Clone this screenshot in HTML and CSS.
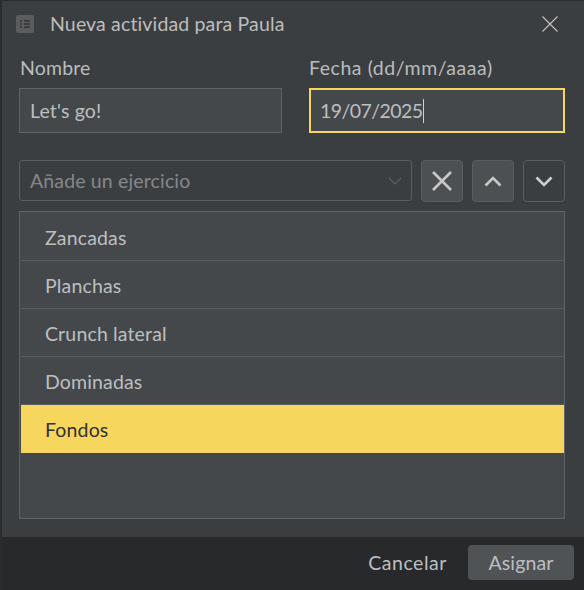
FILE: index.html
```html
<!DOCTYPE html>
<html lang="es">
<head>
<meta charset="utf-8">
<title>Nueva actividad</title>
<link rel="stylesheet" href="styles.css">
</head>
<body>
<div class="dialog">
  <header class="titlebar">
    <svg class="app-icon" width="18" height="18" viewBox="0 0 18 18"><rect width="18" height="18" rx="2" fill="#5a5c5e"/><path d="M4 5h2v2H4zM8 5h6v2H8zM4 8h2v2H4zM8 8h6v2H8zM4 11h2v2H4zM8 11h6v2H8z" fill="#3b3e40"/></svg>
    <span class="title">Nueva actividad para Paula</span>
    <svg class="close" width="16" height="16" viewBox="0 0 16 16"><path d="M.5.5l15 15M15.500.5l-15 15" stroke="#c4c4c4" stroke-width="1.100" fill="none"/></svg>
  </header>
  <main class="content">
    <div class="fields">
      <label class="field name">
        <span class="label">Nombre</span>
        <span class="input">Let's go!</span>
      </label>
      <label class="field date">
        <span class="label date-label">Fecha (dd/mm/aaaa)</span>
        <span class="input focused">19/07/2025<i class="caret"></i></span>
      </label>
    </div>
    <div class="toolbar">
      <div class="combo">
        <span>Añade un ejercicio</span>
        <svg width="14" height="8" viewBox="0 0 14 8"><path d="M1 1l6 6 6-6" stroke="#5d6062" stroke-width="1.200" fill="none"/></svg>
      </div>
      <button class="tool filled"><svg width="20" height="20" viewBox="0 0 20 20"><path d="M1 1l18 18M19 1L1 19" stroke="#c8c8c8" stroke-width="2.600" fill="none"/></svg></button>
      <button class="tool filled"><svg width="18" height="11" viewBox="0 0 18 11"><path d="M1.500 9.500L9 2l7.500 7.500" stroke="#c8c8c8" stroke-width="2.600" fill="none"/></svg></button>
      <button class="tool"><svg width="18" height="11" viewBox="0 0 18 11"><path d="M1.500 1.500L9 9l7.500-7.500" stroke="#d0d0d0" stroke-width="2.600" fill="none"/></svg></button>
    </div>
    <ul class="list">
      <li>Zancadas</li>
      <li>Planchas</li>
      <li>Crunch lateral</li>
      <li>Dominadas</li>
      <li class="selected">Fondos</li>
    </ul>
  </main>
  <footer class="footer">
    <button class="btn cancel">Cancelar</button>
    <button class="btn primary">Asignar</button>
  </footer>
</div>
</body>
</html>
```
FILE: styles.css
```css
* { box-sizing: border-box; }
html, body { margin: 0; height: 100%; }
body {
  background: #2a2c2e;
  font-family: "Lato", "Noto Sans", sans-serif;
  font-size: 19.5px;
  letter-spacing: .15px;
  color: #c0c0c0;
  overflow: hidden;
}
.dialog {
  width: 584px;
  height: 590px;
  padding: 1px 0 0 2px;
  background: #2a2c2e;
  display: flex;
  flex-direction: column;
}
.titlebar {
  height: 48px;
  background: #3b3e40;
  display: flex;
  align-items: center;
  padding: 0 26px 3px 14px;
}
.app-icon { flex: none; }
.title { margin-left: 16px; flex: 1; color: #bdbdbd; }
.close { flex: none; }
.content {
  height: 488px;
  background: #3b3e40;
  padding: 0 9px 0 17px;
  display: flex;
  flex-direction: column;
}
.fields { display: flex; gap: 27px; }
.field { display: flex; flex-direction: column; }
.name { width: 263px; }
.date { width: 256px; }
.label { height: 39px; padding: 7px 0 0 1px; line-height: 24px; color: #b9bcbe; }
.date-label { padding-left: 0; letter-spacing: .55px; }
.input {
  height: 45px;
  display: flex;
  align-items: center;
  padding-left: 10px;
  background: #45484a;
  border: 1px solid #606365;
  color: #bcbfc1;
}
.focused { border: 2px solid #f7d65d; padding-left: 9px; letter-spacing: -.55px; }
.caret { width: 1px; height: 24px; background: #cfcfcf; }
.toolbar { display: flex; gap: 9px; margin-top: 27px; height: 42px; }
.combo {
  width: 393px;
  height: 41px;
  border: 1px solid #5b5e60;
  border-radius: 3px;
  display: flex;
  align-items: center;
  justify-content: space-between;
  padding: 0 9px 0 10px;
  color: #85888a;
}
.tool {
  width: 42px;
  height: 42px;
  padding: 0;
  border: 1px solid #5b5e60;
  border-radius: 4px;
  background: transparent;
  display: flex;
  align-items: center;
  justify-content: center;
}
.filled { background: #4d5052; }
.list {
  list-style: none;
  margin: 9px 0 0;
  padding: 1px 0 0 1px;
  width: 546px;
  height: 308px;
  background: #45484a;
  border: 1px solid #606365;
}
.list li {
  height: 48px;
  display: flex;
  align-items: center;
  padding: 1px 0 0 24px;
  color: #bcbfc1;
  border-bottom: 1px solid #5a5d5f;
}
.list li.selected { background: #f7d65d; color: #2f3133; border-bottom: 0; padding-top: 0; }
.footer {
  flex: 1;
  background: #27292b;
  display: flex;
  align-items: center;
  justify-content: flex-end;
  gap: 21px;
  padding: 0 10px 3px 0;
}
.btn {
  font: inherit;
  letter-spacing: inherit;
  color: #bcbfc1;
  background: transparent;
  border: 0;
  padding: 0;
}
.cancel { letter-spacing: .55px; }
.primary { width: 106px; height: 35px; background: #505355; border-radius: 4px; }
```
